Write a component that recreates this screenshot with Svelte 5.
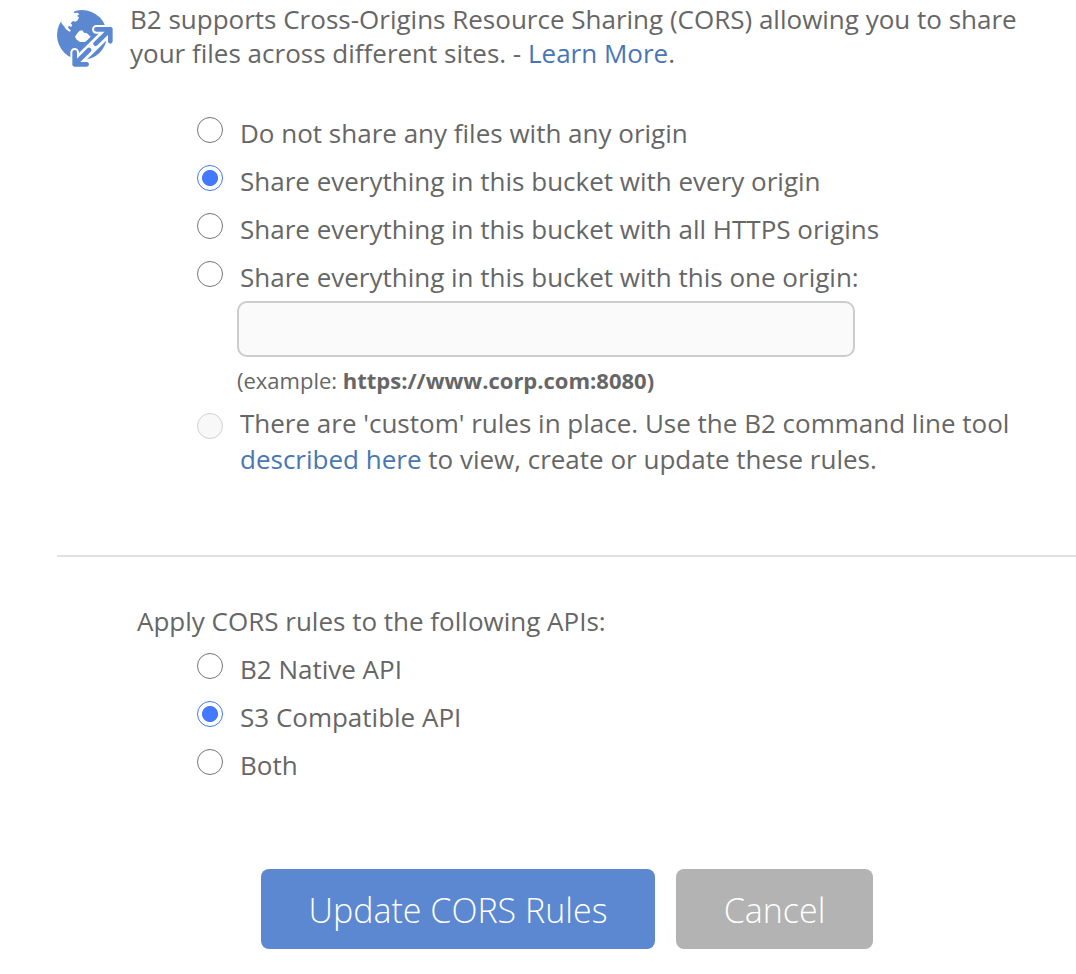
<script>
  let sharing = $state('every');
  let api = $state('s3');
  let origin = $state('');

  const shareOptions = [
    { value: 'none', label: 'Do not share any files with any origin' },
    { value: 'every', label: 'Share everything in this bucket with every origin' },
    { value: 'https', label: 'Share everything in this bucket with all HTTPS origins' },
    { value: 'one', label: 'Share everything in this bucket with this one origin:' }
  ];
  const apiOptions = [
    { value: 'native', label: 'B2 Native API' },
    { value: 's3', label: 'S3 Compatible API' },
    { value: 'both', label: 'Both' }
  ];
</script>

<main>
  <header>
    <svg class="globe" viewBox="21 18 168 171" aria-hidden="true">
      <circle cx="96" cy="93" r="75" fill="#5b88d0" />
      <path fill="#fff" d="M36 44C45 30 57 20 76 14L71 27L83 26L88 31L81 36L87 40L83 49L76 53L69 51L62 58L67 64L63 69L56 65L54 71L63 80L58 83L48 76L42 67L36 60L33 53Z" />
      <path fill="#fff" d="M75 98L82 88L89 80L97 79L102 86L111 88L122 98L113 107L105 114L90 114L80 107Z" />
      <path fill="none" stroke="#fff" stroke-width="26" stroke-linejoin="round" stroke-linecap="round" d="M139 76H181V112M74 145V181H110" />
      <path fill="none" stroke="#fff" stroke-width="31" d="M74 181L181 76" />
      <path fill="none" stroke="#5b88d0" stroke-width="14" stroke-linecap="round" stroke-linejoin="round" d="M139 76H181V112M181 76L137 119M74 145V181H110M74 181L117 138" />
    </svg>
    <p>
      B2 supports Cross-Origins Resource Sharing (CORS) allowing you to share<br />
      your files across different sites. - <a href="#learn">Learn More</a>.
    </p>
  </header>

  <section class="sharing">
    {#each shareOptions as option}
      <label>
        <input type="radio" name="sharing" value={option.value} bind:group={sharing} />
        <span>{option.label}</span>
      </label>
    {/each}
    <div class="origin">
      <input type="text" aria-label="Origin" bind:value={origin} />
      <p>(example: <strong>https://www.corp.com:8080)</strong></p>
    </div>
    <label class="custom">
      <input type="radio" name="sharing" value="custom" disabled />
      <span>
        There are 'custom' rules in place. Use the B2 command line tool<br />
        <a href="#docs">described here</a> to view, create or update these rules.
      </span>
    </label>
  </section>

  <hr />

  <section class="apis">
    <p>Apply CORS rules to the following APIs:</p>
    {#each apiOptions as option}
      <label>
        <input type="radio" name="api" value={option.value} bind:group={api} />
        <span>{option.label}</span>
      </label>
    {/each}
  </section>

  <footer>
    <button class="primary" type="button">Update CORS Rules</button>
    <button class="secondary" type="button">Cancel</button>
  </footer>
</main>

<style>
  :global(body) {
    margin: 0;
    background: #fff;
  }
  main {
    box-sizing: border-box;
    width: 1076px;
    height: 974px;
    overflow: hidden;
    padding: 2px 0 0 57px;
    color: #666;
    font: 26px/48px 'Open Sans', sans-serif;
    white-space: nowrap;
  }
  p {
    margin: 0;
  }
  a {
    color: #4876b4;
    text-decoration: none;
  }
  header {
    display: flex;
    gap: 17px;
    height: 107px;
    line-height: 34px;
  }
  .globe {
    width: 56px;
    height: 57px;
    margin-top: 8px;
    flex: none;
  }
  .sharing,
  .apis {
    padding-left: 140px;
  }
  label {
    display: flex;
    gap: 17px;
    height: 48px;
  }
  input[type='radio'] {
    appearance: none;
    box-sizing: border-box;
    flex: none;
    width: 26px;
    height: 26px;
    margin: 8px 0 0;
    border: 1px solid #767676;
    border-radius: 50%;
    background: #fff;
  }
  input[type='radio']:checked {
    border-color: #4379ff;
    background: radial-gradient(circle, #4379ff 7.6px, #fff 8.4px);
  }
  input[type='radio']:disabled {
    border-color: #d1d1d1;
    background: #f8f8f8;
  }
  .origin {
    height: 104px;
    padding-left: 40px;
  }
  .origin input {
    display: block;
    box-sizing: border-box;
    width: 618px;
    height: 56px;
    padding: 0 14px;
    border: 2px solid #ccc;
    border-radius: 10px;
    background: #fafafa;
    color: #666;
    font: inherit;
  }
  .origin p {
    font-size: 22px;
    line-height: 46px;
  }
  .custom {
    height: 72px;
    line-height: 36px;
  }
  hr {
    height: 2px;
    margin: 78px 0 40px;
    border: 0;
    background: #e1e1e1;
  }
  .apis p {
    margin-left: -60px;
  }
  footer {
    display: flex;
    gap: 21px;
    padding: 80px 0 0 204px;
  }
  button {
    box-sizing: border-box;
    height: 80px;
    padding: 2px 0 0;
    border: 0;
    border-radius: 8px;
    color: #fff;
    font: 300 34px/78px 'Open Sans', sans-serif;
  }
  .primary {
    width: 394px;
    background: #5b88d0;
  }
  .secondary {
    width: 197px;
    background: #b3b3b3;
  }
</style>
